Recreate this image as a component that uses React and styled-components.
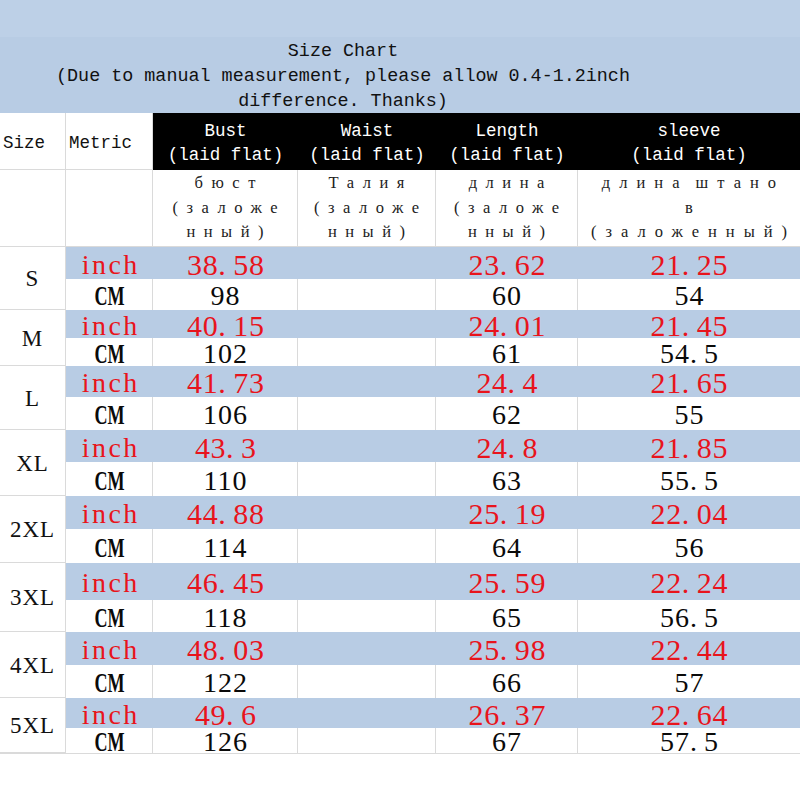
import React from "react";
import styled, { createGlobalStyle } from "styled-components";

const mono = `"Liberation Mono", "DejaVu Sans Mono", monospace`;
const serif = `"Liberation Serif", "Times New Roman", serif`;

const Global = createGlobalStyle`
  body {
    margin: 0;
    background: #ffffff;
  }
`
const Page = styled.div`
  width: 800px;
  height: 800px;
  background: #ffffff;
  overflow: hidden;
`
const TopBand = styled.div`
  height: 37px;
  background: #bdd0e7;
`
const TitleBlock = styled.div`
  height: 76px;
  width: 686px;
  padding-right: 114px;
  background: #b8cce4;
  font-family: ${mono};
  font-size: 18.4px;
  line-height: 25px;
  color: #111;
  text-align: center;
  display: flex;
  flex-direction: column;
  justify-content: center;
  box-sizing: content-box;
`
const Line = styled.div`
  white-space: pre;
  position: relative;
  top: 1px;
`
const Row = styled.div`
  display: grid;
  grid-template-columns: 66px 87px 145px 138px 142px 222px;
  height: ${p => p.$h}px;
`
const PlainHead = styled.div`
  background: #fff;
  border-right: 1px solid #dadada;
  border-bottom: 1px solid #dadada;
  box-sizing: border-box;
  font-family: ${mono};
  font-size: 17.5px;
  color: #111;
  display: flex;
  align-items: center;
  padding-left: 3px;
  padding-top: 4px;
`
const BlackHead = styled.div`
  background: #000;
  color: #fff;
  font-family: ${mono};
  font-size: 17.5px;
  line-height: 24px;
  display: flex;
  flex-direction: column;
  align-items: center;
  justify-content: center;
  padding-top: 2px;
`
const RuCell = styled.div`
  background: #fff;
  border-right: 1px solid #dadada;
  border-bottom: 1px solid #dadada;
  box-sizing: border-box;
  font-family: ${serif};
  font-size: 16.5px;
  line-height: 24.5px;
  color: #222;
  display: flex;
  flex-direction: column;
  align-items: center;
  justify-content: center;
  overflow: hidden;
  &:last-child {
    border-right: none;
  }
`
const RuLine = styled.div`
  white-space: pre;
  letter-spacing: ${p => p.$ls}px;
  word-spacing: -6px;
  padding-left: ${p => p.$ls}px;
`
const Block = styled.div`
  display: flex;
`
const SizeCell = styled.div`
  width: 66px;
  flex: none;
  box-sizing: border-box;
  border-right: 1px solid #dadada;
  border-bottom: 1px solid #dadada;
  display: flex;
  align-items: center;
  justify-content: center;
  font-family: ${serif};
  font-size: 23px;
  letter-spacing: 1px;
  color: #111;
  padding-top: 2px;
`
const Rows = styled.div`
  flex: 1;
  display: flex;
  flex-direction: column;
`
const DataRow = styled.div`
  display: grid;
  grid-template-columns: 87px 145px 138px 142px 222px;
  height: ${p => p.$h}px;
  background: ${p => (p.$inch ? "#b8cce4" : "#ffffff")};
`
const DataCell = styled.div`
  box-sizing: border-box;
  border-right: ${p => (p.$inch ? "none" : "1px solid #dadada")};
  display: flex;
  align-items: center;
  justify-content: center;
  overflow: visible;
  white-space: nowrap;
  font-family: ${serif};
  line-height: 20px;
  padding-top: 3px;
  &:last-child {
    border-right: none;
  }
`
const Inch = styled.span`
  color: #e8141c;
  font-size: 28px;
  letter-spacing: 2.5px;
  padding-left: 2.5px;
`
const Cm = styled.span`
  display: inline-block;
  color: #0a0a0a;
  font-size: 27px;
  font-weight: bold;
  transform: scaleX(0.67);
`
const Value = styled.span`
  color: ${p => (p.$inch ? "#e8141c" : "#0a0a0a")};
  font-size: ${p => (p.$inch ? 30 : 28)}px;
  letter-spacing: ${p => (p.$inch ? 0.6 : 1)}px;
  padding-left: ${p => (p.$inch ? 0.6 : 1)}px;
`
const Dot = styled.span`
  display: inline-block;
  width: 0.5em;
  text-align: left;
`
const TableEnd = styled.div`
  border-top: 1px solid #dadada;
`

const sizes = [
  { size: "S", inch: ["38.58", "", "23.62", "21.25"], cm: ["98", "", "60", "54"], h: [32, 31] },
  { size: "M", inch: ["40.15", "", "24.01", "21.45"], cm: ["102", "", "61", "54.5"], h: [28, 28] },
  { size: "L", inch: ["41.73", "", "24.4", "21.65"], cm: ["106", "", "62", "55"], h: [31, 33] },
  { size: "XL", inch: ["43.3", "", "24.8", "21.85"], cm: ["110", "", "63", "55.5"], h: [32, 34] },
  { size: "2XL", inch: ["44.88", "", "25.19", "22.04"], cm: ["114", "", "64", "56"], h: [33, 34] },
  { size: "3XL", inch: ["46.45", "", "25.59", "22.24"], cm: ["118", "", "65", "56.5"], h: [37, 32] },
  { size: "4XL", inch: ["48.03", "", "25.98", "22.44"], cm: ["122", "", "66", "57"], h: [33, 33] },
  { size: "5XL", inch: ["49.6", "", "26.37", "22.64"], cm: ["126", "", "67", "57.5"], h: [30, 25] },
];

const heads = ["Bust", "Waist", "Length", "sleeve"];

const russian = [
  { ls: 8.5, lines: ["бюст", "(заложе", "нный)"] },
  { ls: 8.5, lines: ["Талия", "(заложе", "нный)"] },
  { ls: 8.5, lines: ["длина", "(заложе", "нный)"] },
  { ls: 9, lines: ["длина штано", "в", "(заложенный)"] },
];

function Num({ value, inch }) {
  if (!value) return null;
  const [a, b] = value.split(".");
  return (
    <Value $inch={inch}>
      {a}
      {b !== undefined && <Dot>.</Dot>}
      {b}
    </Value>
  );
}

export default function App() {
  return (
    <Page>
      <Global />
      <TopBand />
      <TitleBlock>
        <Line>Size Chart</Line>
        <Line>(Due to manual measurement, please allow 0.4-1.2inch</Line>
        <Line>difference. Thanks)</Line>
      </TitleBlock>

      <Row $h={57}>
        <PlainHead>Size</PlainHead>
        <PlainHead>Metric</PlainHead>
        {heads.map(h => (
          <BlackHead key={h}>
            <div>{h}</div>
            <div>(laid flat)</div>
          </BlackHead>
        ))}
      </Row>

      <Row $h={77}>
        <RuCell />
        <RuCell />
        {russian.map((r, i) => (
          <RuCell key={i}>
            {r.lines.map((l, j) => (
              <RuLine key={j} $ls={r.ls}>{l}</RuLine>
            ))}
          </RuCell>
        ))}
      </Row>

      {sizes.map(s => (
        <Block key={s.size}>
          <SizeCell>{s.size}</SizeCell>
          <Rows>
            <DataRow $inch $h={s.h[0]}>
              <DataCell $inch><Inch>inch</Inch></DataCell>
              {s.inch.map((v, i) => (
                <DataCell $inch key={i}><Num value={v} inch /></DataCell>
              ))}
            </DataRow>
            <DataRow $h={s.h[1]}>
              <DataCell><Cm>CM</Cm></DataCell>
              {s.cm.map((v, i) => (
                <DataCell key={i}><Num value={v} /></DataCell>
              ))}
            </DataRow>
          </Rows>
        </Block>
      ))}
      <TableEnd />
    </Page>
  );
}
